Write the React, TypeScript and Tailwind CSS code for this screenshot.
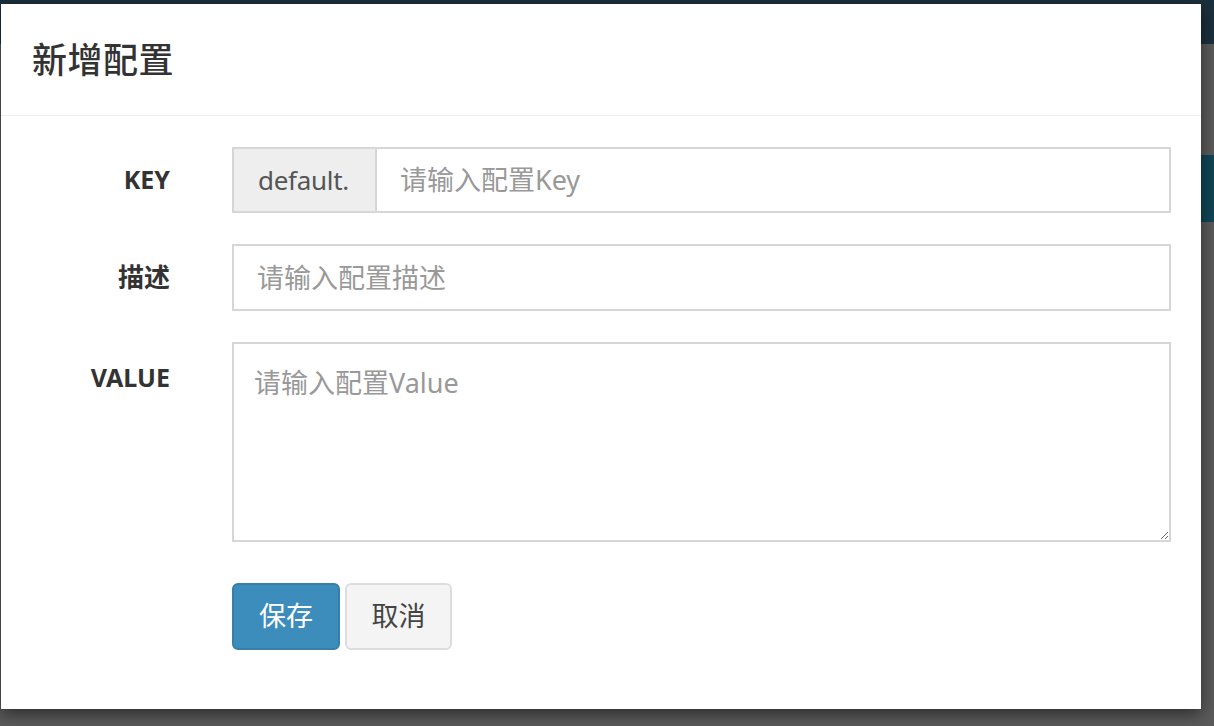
import React from "react";

const font = { fontFamily: '"Noto Sans", "Noto Sans CJK SC", sans-serif' };

export default function App() {
  return (
    <div className="relative w-[1214px] h-[726px] overflow-hidden bg-[#5a5a5a]" style={font}>
      {/* dimmed page behind the modal */}
      <div className="h-[44px] bg-[#1b2f3c]" />
      <div className="flex justify-end mt-[111px]">
        <div className="w-[20px] h-[67px] bg-[#0f4656]" />
      </div>

      {/* Modal */}
      <div className="absolute left-[1px] top-[4px] w-[1200px] h-[705px] bg-white shadow-[0_5px_15px_rgba(0,0,0,0.5)] flex flex-col">
        {/* Header */}
        <div className="h-[112px] flex items-center pl-[31px] border-b border-[#f0f0f0]">
          <h4 className="text-[35px] font-medium text-[#333] leading-none tracking-[0.5px]">新增配置</h4>
        </div>

        {/* Body */}
        <div className="px-[30px] pt-[31px] flex flex-col gap-[31px] text-[27px]">
          <div className="flex items-center">
            <label className="w-[139px] text-right font-bold text-[#333] text-[25px]">KEY</label>
            <div className="ml-[62px] flex flex-1 h-[66px] border-2 border-[#d6d6d6]">
              <span className="flex items-center pl-[24px] pr-[26px] bg-[#eeeeee] border-r-2 border-[#d6d6d6] text-[#555] text-[26px] tracking-[-0.3px]">default.</span>
              <input
                className="flex-1 px-[23px] outline-none text-[#555] placeholder:text-[#999] bg-white"
                placeholder="请输入配置Key"
              />
            </div>
          </div>

          <div className="flex items-center">
            <label className="w-[139px] text-right font-bold text-[#333] text-[26px]">描述</label>
            <input
              className="ml-[62px] flex-1 h-[67px] border-2 border-[#d6d6d6] px-[23px] outline-none text-[#555] placeholder:text-[#999]"
              placeholder="请输入配置描述"
            />
          </div>

          <div className="flex items-start">
            <label className="w-[139px] text-right font-bold text-[#333] text-[25px] pt-[17px]">VALUE</label>
            <textarea
              className="ml-[62px] flex-1 h-[200px] border-2 border-[#d6d6d6] px-[20px] pt-[20px] outline-none text-[#555] placeholder:text-[#999] leading-[1.4]"
              placeholder="请输入配置Value"
            />
          </div>

          <div className="flex gap-[5px] ml-[201px] mt-[10px]">
            <button className="w-[108px] h-[67px] rounded-[6px] bg-[#3c8dbc] border-2 border-[#367fa9] text-white">保存</button>
            <button className="w-[107px] h-[67px] rounded-[6px] bg-[#f4f4f4] border-2 border-[#dddddd] text-[#444]">取消</button>
          </div>
        </div>
      </div>
    </div>
  );
}
